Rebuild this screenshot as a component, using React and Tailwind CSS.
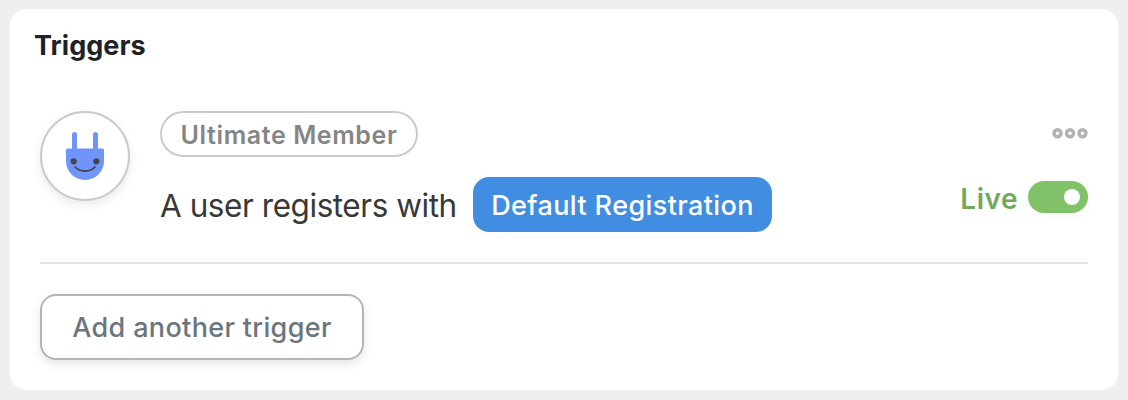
import React, { useState } from 'react';

const PlugIcon = () => (
    <svg width="38" height="48" viewBox="0 0 38 48" fill="none">
        <path d="M6 2.5a2.5 2.5 0 0 1 5 0V18H6zM27 2.5a2.5 2.5 0 0 1 5 0V18h-5z" fill="#6f95fb" />
        <path d="M1.5 16.5h35a1.5 1.5 0 0 1 1.5 1.5v11a19 19 0 0 1-38 0V18a1.5 1.5 0 0 1 1.5-1.5z" fill="#6f95fb" />
        <circle cx="7.7" cy="29.3" r="3.1" fill="#42454b" />
        <circle cx="30.3" cy="29.3" r="3.1" fill="#42454b" />
        <path d="M9 35c5 5.3 15 5.3 20 0" stroke="#42454b" strokeWidth="1.8" strokeLinecap="round" />
    </svg>
);

const MoreIcon = () => (
    <svg width="36" height="12" viewBox="0 0 36 12" fill="none" stroke="#b2b2b2" strokeWidth="3.4">
        <circle cx="5.5" cy="6.3" r="3.5" />
        <circle cx="18" cy="6.3" r="3.5" />
        <circle cx="30.5" cy="6.3" r="3.5" />
    </svg>
);

const App = () => {
    const [live, setLive] = useState(true);

    return (
        <div className="h-[400px] bg-[#efefef] px-2.5 pt-[9px] font-['Inter',sans-serif]">
            <div className="h-[381px] rounded-2xl bg-white pt-5">
                <h2 className="pl-6 pt-px text-[27px] leading-8 font-bold tracking-[0.05px] text-[#1d2327] whitespace-nowrap">Triggers</h2>

                <div className="mx-[30px] mt-[49px] flex h-[153px] border-b-2 border-[#e6e6e6]">
                    <div className="flex size-[90px] shrink-0 items-center justify-center rounded-full border-2 border-[#cbcbcb] bg-white shadow-[0_4px_10px_rgba(0,0,0,0.09)]">
                        <PlugIcon />
                    </div>

                    <div className="ml-[30px] flex flex-col items-start">
                        <div className="flex h-[46px] w-[258px] items-center justify-center rounded-full border-2 border-[#cbcbcb] pt-[3px] text-[25px] font-semibold tracking-[0.6px] text-[#858585] whitespace-nowrap">
                            <span>Ultimate Member</span>
                        </div>
                        <div className="mt-5 flex h-[55px] items-center">
                            <div className="w-[313px] pt-[3px] text-[31.5px] tracking-[-0.45px] text-[#383838] whitespace-nowrap">
                                <span>A user registers with</span>
                            </div>
                            <div className="flex h-[55px] w-[299px] items-center justify-center rounded-2xl bg-[#418de1] pt-[3px] text-[27px] font-medium tracking-[0.4px] text-white whitespace-nowrap">
                                <span>Default Registration</span>
                            </div>
                        </div>
                    </div>

                    <div className="ml-auto flex flex-col items-end pt-4">
                        <button type="button" aria-label="More options">
                            <MoreIcon />
                        </button>
                        <button type="button" onClick={() => setLive(!live)} className="mt-[42px] flex h-8 items-center gap-2.5">
                            <span className="pt-[3px] text-[28px] font-semibold tracking-[0.5px] text-[#70a95c]">{live ? 'Live' : 'Draft'}</span>
                            <span className="flex h-8 w-[60px] items-center justify-end rounded-full bg-[#81c268] pr-2 shadow-[0_2px_10px_rgba(0,0,0,0.04)]">
                                <span className="size-4 rounded-full bg-white" />
                            </span>
                        </button>
                    </div>
                </div>

                <button type="button" className="mt-[30px] ml-[30px] flex h-[66px] w-[324px] items-center justify-center rounded-2xl border-2 border-[#b5b5b5] bg-white pt-0.5 text-[27px] font-medium tracking-[0.35px] text-[#6c757d] whitespace-nowrap shadow-[0_4px_10px_rgba(0,0,0,0.1)]">
                    <span>Add another trigger</span>
                </button>
            </div>
        </div>
    );
};

export default App;
